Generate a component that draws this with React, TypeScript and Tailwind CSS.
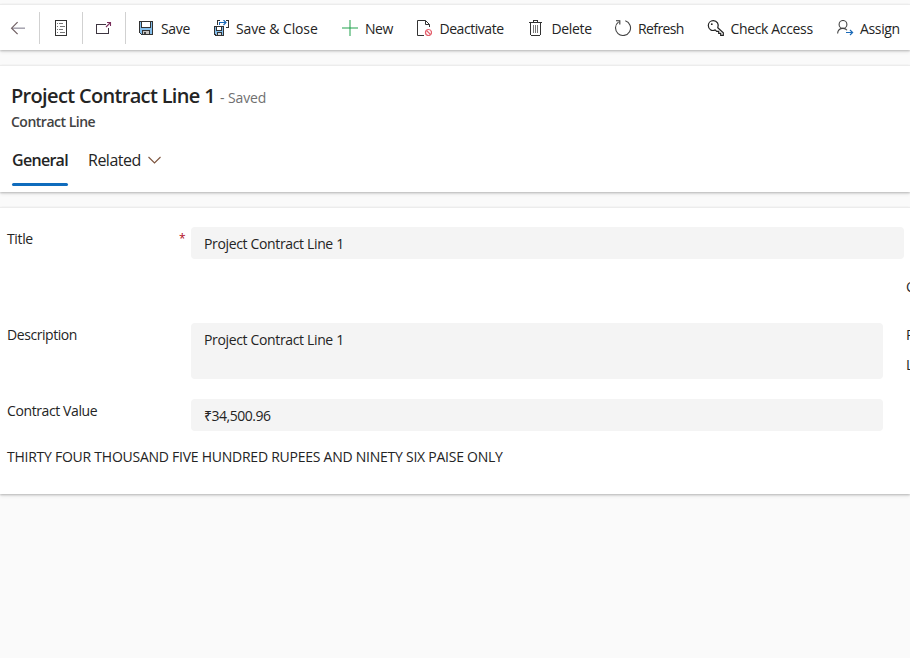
import type { ReactNode } from "react";

function BackIcon() {
  return (
    <svg width="16" height="16" viewBox="0 0 16 16" fill="none">
      <path d="M2 8.2H15" stroke="#a5a2ae" strokeWidth="1.5" />
      <path d="M7.6 2.2L1.6 8.2L7.6 14.2" stroke="#6f5f62" strokeWidth="1.2" />
    </svg>
  );
}

function FormIcon() {
  return (
    <svg width="16" height="16" viewBox="0 0 16 16" fill="none" shapeRendering="crispEdges">
      <path d="M.5 .5H11.5V15.5H.5Z" stroke="#333" />
      <path d="M2 3.5H3M2 6.5H3M2 9.5H3M2 12.5H3M4 3.5H8M5 6.5H10M4 9.5H8M5 12.5H10" stroke="#777" />
    </svg>
  );
}

function PopOutIcon() {
  return (
    <svg width="16" height="16" viewBox="0 0 16 16" fill="none">
      <path d="M10 4.5H.5V13.5H12.5V8" stroke="#3d3540" shapeRendering="crispEdges" />
      <path d="M10 7L14.5 2.5M11 2.5H14.5V6" stroke="#7a2f5c" strokeWidth="1.1" />
    </svg>
  );
}

function SaveIcon() {
  return (
    <svg width="16" height="16" viewBox="0 0 16 16" shapeRendering="crispEdges">
      <path d="M1.5 1.5H14.5V14.5H3.5L1.5 12.5Z" fill="#83beec" stroke="#333" />
      <path d="M3.5 1.5H12.5V7.5H3.5Z" fill="#fff" stroke="#333" />
      <path d="M4.5 10.5H11.5V14.5H4.5Z" fill="#c8c6c4" stroke="#333" />
      <path d="M6 12H8V14H6Z" fill="#444" />
    </svg>
  );
}

function SaveCloseIcon() {
  return (
    <svg width="16" height="16" viewBox="0 0 16 16" fill="none" shapeRendering="crispEdges">
      <path d="M3.5 5V.5H6M12 .5H14.5V7.5H12" stroke="#333" />
      <path d="M.5 6.5H9.5V15.5H2L.5 14Z" fill="#83beec" stroke="#333" />
      <path d="M2.5 6.5H7.5V10.5H2.5Z" fill="#fff" stroke="#333" />
      <path d="M3.5 12.5H7.5V15.5H3.5Z" fill="#ddd" stroke="#333" />
      <path d="M5.5 5V2.5H12" stroke="#1b6ab8" />
      <path d="M9.5 0L12 2.5L9.5 5" stroke="#1b6ab8" shapeRendering="auto" strokeWidth="1.2" />
    </svg>
  );
}

function NewIcon() {
  return (
    <svg width="16" height="16" viewBox="0 0 16 16" shapeRendering="crispEdges">
      <path d="M0 7H16V9H0Z" fill="#8fd0a5" />
      <path d="M7 0H9V16H7Z" fill="#8fd0a5" />
      <path d="M7 7H9V9H7Z" fill="#55b777" />
    </svg>
  );
}

function DeactivateIcon() {
  return (
    <svg width="16" height="16" viewBox="0 0 16 16" fill="none">
      <path d="M8 15.5H1.5V.5H9.5L13.5 4.5V7" stroke="#333" />
      <path d="M9.5 .5V4.5H13.5" stroke="#333" />
      <circle cx="12.5" cy="12.5" r="3" stroke="#e35d6a" strokeWidth="1.2" />
      <path d="M10.5 10.5L14.5 14.5" stroke="#e35d6a" strokeWidth="1.1" />
    </svg>
  );
}

function DeleteIcon() {
  return (
    <svg width="16" height="16" viewBox="0 0 16 16" fill="none" shapeRendering="crispEdges">
      <path d="M0 2.5H13M4.5 2V.5H8.5V2M1.5 3V14.5L2.5 15.5H10.5L11.5 14.5V3" stroke="#333" />
      <path d="M4.5 5V13M6.5 5V13M8.5 5V13" stroke="#777" />
    </svg>
  );
}

function RefreshIcon() {
  return (
    <svg className="shrink-0" width="18" height="16" viewBox="0 0 18 16" fill="none">
      <path d="M11.3 .8A7.5 7.5 0 1 1 4.6 1.9" stroke="#444" strokeWidth="1.1" />
      <path d="M2 .8H5.8V4.6" stroke="#333" strokeWidth="1.1" />
    </svg>
  );
}

function KeyIcon() {
  return (
    <svg className="shrink-0" width="17" height="16" viewBox="0 0 17 16" fill="none" stroke="#222">
      <path d="M10.8 7.8L16.3 12.8V15.4H13.7V13.4H11.7V11.4H9.7L8.2 9.9C4.8 11.6 1.3 9.2 1.3 5.6C1.3 2.8 3.5 .6 6.3 .6C10 .6 12.3 4.4 10.8 7.8Z" strokeWidth="1.2" />
      <circle cx="4.8" cy="4.2" r=".9" fill="#222" stroke="none" />
    </svg>
  );
}

function AssignIcon() {
  return (
    <svg className="shrink-0" width="17" height="16" viewBox="0 0 17 16" fill="none">
      <circle cx="6" cy="4.4" r="3.9" stroke="#444" strokeWidth="1.1" />
      <path d="M.6 13.5C.8 10.3 3 8.4 6 8.4C7.8 8.4 9.2 9 10 10.2" stroke="#444" strokeWidth="1.1" />
      <path d="M9 12.5H15.5M13 10L15.6 12.5L13 15" stroke="#1b6ab8" strokeWidth="1.2" />
    </svg>
  );
}

function Command({ icon, label, box, gap }: { icon: ReactNode; label: string; box: string; gap: string }) {
  return (
    <button className={`flex h-full shrink-0 items-center whitespace-nowrap ${box}`}>
      <span className="flex w-4 shrink-0">{icon}</span>
      <span className={`mt-0.5 ${gap}`}>{label}</span>
    </button>
  );
}

function IconCell({ children, box }: { children: ReactNode; box: string }) {
  return <div className={`flex h-8 shrink-0 items-center border-r border-[#d1d1d1] ${box}`}>{children}</div>;
}

const card = "border-t border-[#ececec] bg-white shadow-[0_1px_2px_rgba(0,0,0,0.22),0_2px_4px_rgba(0,0,0,0.08)]";

export default function App() {
  return (
    <div className="h-[658px] w-[910px] overflow-hidden bg-[#fafafa] pt-1 font-['Open_Sans','Noto_Sans',sans-serif] text-sm leading-5 tracking-[-0.35px] text-[#242424]">
      <header className={`flex h-[46px] items-center ${card}`}>
        <IconCell box="w-10 pl-2.5"><BackIcon /></IconCell>
        <IconCell box="w-[43px] pl-[15px]"><FormIcon /></IconCell>
        <IconCell box="w-[43px] pl-[13px]"><PopOutIcon /></IconCell>
        <Command icon={<SaveIcon />} label="Save" box="ml-3 w-[76px]" gap="ml-[7px]" />
        <Command icon={<SaveCloseIcon />} label="Save & Close" box="w-32 tracking-[-0.12px]" gap="ml-[6px]" />
        <Command icon={<NewIcon />} label="New" box="w-[74px] tracking-[-0.5px]" gap="ml-[7px]" />
        <Command icon={<DeactivateIcon />} label="Deactivate" box="w-[113px] tracking-[-0.45px]" gap="ml-[7.5px]" />
        <Command icon={<DeleteIcon />} label="Delete" box="w-[85px]" gap="ml-[6.5px]" />
        <Command icon={<RefreshIcon />} label="Refresh" box="w-[93px] tracking-[-0.6px]" gap="ml-2" />
        <Command icon={<KeyIcon />} label="Check Access" box="w-[130px]" gap="ml-[7.5px]" />
        <Command icon={<AssignIcon />} label="Assign" box="w-[73px]" gap="ml-[7px]" />
      </header>

      <section className={`mt-[15px] h-[127px] pl-[11px] pt-4 ${card}`}>
        <div className="flex h-7 items-center whitespace-nowrap">
          <h1 className="w-[209px] text-xl font-semibold leading-7 tracking-[-0.67px]">Project Contract Line 1</h1>
          <span className="pt-1 tracking-[-0.1px] text-[#707070]">- Saved</span>
        </div>
        <p className="mt-0.5 font-semibold tracking-[-0.5px] text-[#424242]">Contract Line</p>
        <nav className="mt-4 flex pl-px text-base leading-6 tracking-[-0.5px]">
          <div className="flex w-14 flex-col gap-[11px] font-semibold tracking-[-0.7px]">
            <span>General</span>
            <span className="h-[3px] rounded-full bg-[#0f6cbd]" />
          </div>
          <div className="ml-5 flex h-6 items-center whitespace-nowrap">
            <span className="w-[60px]">Related</span>
            <svg width="13" height="8" viewBox="0 0 13 8" fill="none"><path d="M.5 1L6.5 7L12.5 1" stroke="#7d553e" strokeWidth="1.1" /></svg>
          </div>
        </nav>
      </section>

      <main className={`mt-[15px] flex h-[287px] whitespace-nowrap pt-[19px] ${card}`}>
        <div className="w-[906px] shrink-0 pl-[7px]">
          <div className="flex h-24">
            <label className="w-[172px] pt-0.5">Title</label>
            <span className="w-3 pt-0.5 text-xs leading-5 text-[#b10e1c]">*</span>
            <div className="h-8 w-[713px] rounded bg-[#f4f4f4] pl-[13px] pt-[7px]">Project Contract Line 1</div>
          </div>
          <div className="flex h-[76px]">
            <label className="w-[184px] pt-0.5 tracking-[-0.43px]">Description</label>
            <div className="h-14 w-[692px] rounded bg-[#f4f4f4] pl-[13px] pt-[7px]">Project Contract Line 1</div>
          </div>
          <div className="flex h-12">
            <label className="w-[184px] pt-0.5 tracking-[-0.4px]">Contract Value</label>
            <div className="h-8 w-[692px] rounded bg-[#f4f4f4] pl-[13px] pt-[7px] tracking-[-0.48px]">₹34,500.96</div>
          </div>
          <p className="tracking-[-0.25px]">THIRTY FOUR THOUSAND FIVE HUNDRED RUPEES AND NINETY SIX PAISE ONLY</p>
        </div>
        <aside className="w-1 shrink-0 overflow-hidden pt-[50px]">
          <p>Owner</p>
          <p className="mt-7">Product</p>
          <p className="mt-2.5">Line</p>
        </aside>
      </main>
    </div>
  );
}
